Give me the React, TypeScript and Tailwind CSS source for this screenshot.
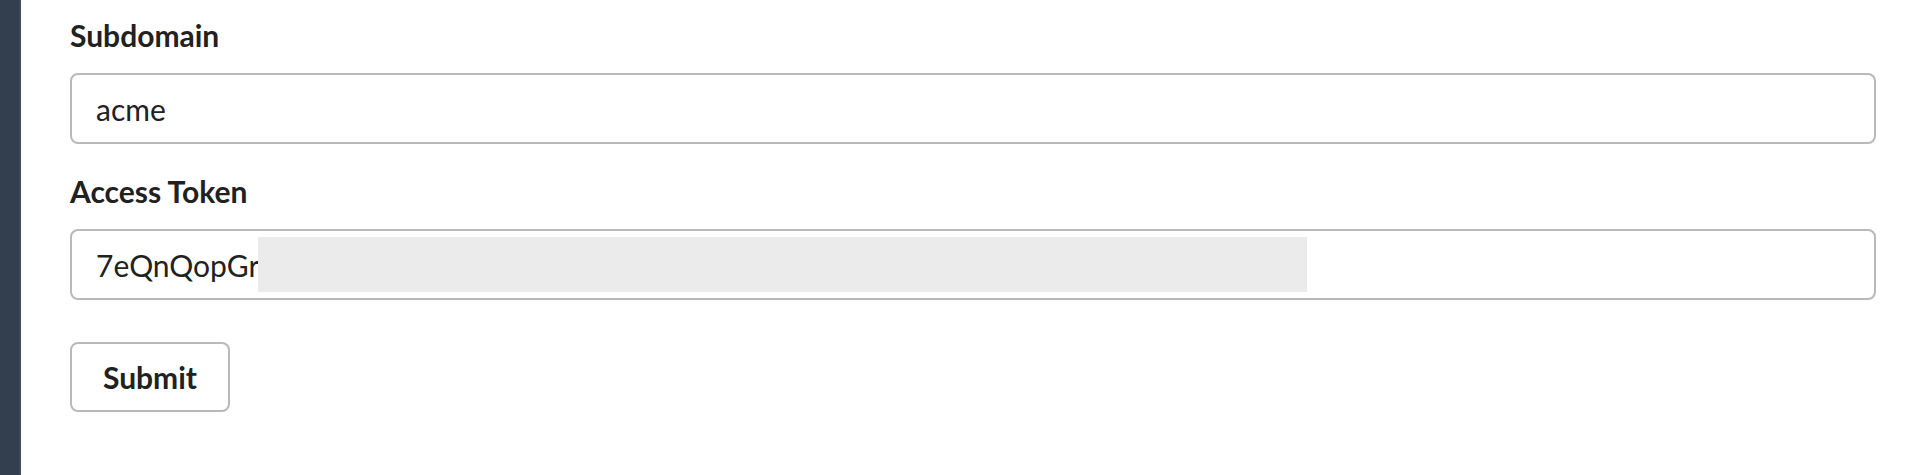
import React from "react";

export default function App() {
  return (
    <div
      className="flex h-[475px] w-full bg-white text-[#212121]"
      style={{ fontFamily: "Lato, 'Noto Sans', sans-serif" }}
    >
      <div className="w-[21px] shrink-0 bg-[#333f4f] border-r-2 border-[#3d4a5b]" />
      <div className="flex-1 pl-[49px] pr-[48px] pt-[18px]">
        <label className="block text-[30px] font-bold leading-[35px]">Subdomain</label>
        <input
          readOnly
          value="acme"
          className="mt-[20px] block h-[71px] w-full rounded-[8px] border-2 border-[#b9b9b9] bg-white px-[24px] text-[30px] text-[#212121] outline-none"
        />
        <label className="mt-[30px] block text-[30px] font-bold leading-[35px]">Access Token</label>
        <div className="relative mt-[20px]">
          <input
            readOnly
            value="7eQnQopGr"
            className="block h-[71px] w-full rounded-[8px] border-2 border-[#b9b9b9] bg-white px-[24px] text-[30px] text-[#212121] outline-none"
          />
          <div className="absolute left-[188px] top-[8px] h-[55px] w-[1049px] bg-[#ebebeb]" />
        </div>
        <button className="mt-[42px] flex h-[70px] w-[160px] items-center justify-center rounded-[8px] border-2 border-[#b9b9b9] bg-white text-[30px] font-bold text-[#212121]">
          Submit
        </button>
      </div>
    </div>
  );
}
